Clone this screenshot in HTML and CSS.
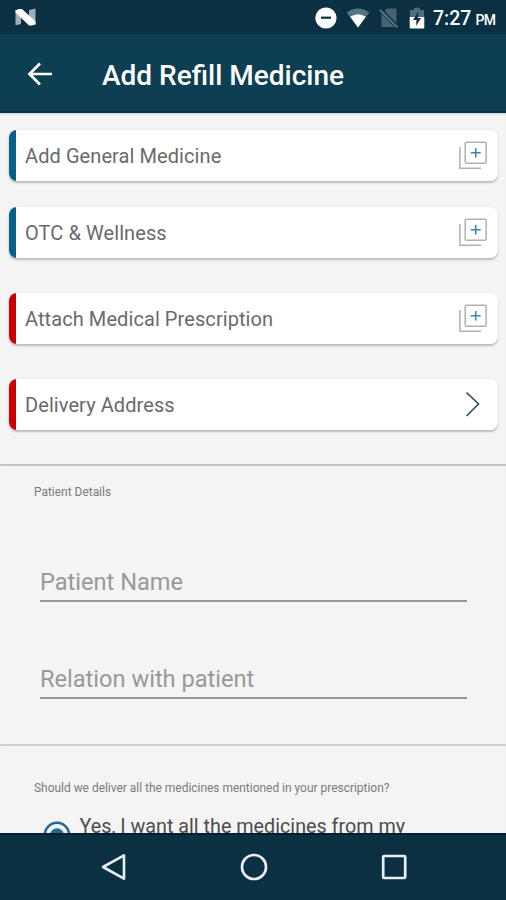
FILE: index.html
```html
<!DOCTYPE html>
<html lang="en">
<head>
<meta charset="utf-8">
<title>Add Refill Medicine</title>
<link rel="stylesheet" href="styles.css">
</head>
<body>
<svg class="defs" width="0" height="0" aria-hidden="true">
  <symbol id="add-copy" viewBox="0 0 30 30">
    <rect x="7.2" y="2.2" width="21" height="21" rx="1.2" fill="none" stroke="#b1b1b1" stroke-width="1.5"/>
    <path d="M1.900 7v21.3H23" fill="none" stroke="#b1b1b1" stroke-width="1.5"/>
    <path d="M12.700 12.7h10M17.700 7.9v9.6" stroke="#3f86ab" stroke-width="1.6"/>
  </symbol>
</svg>
<div class="screen">
  <header class="status">
    <svg class="n-logo" width="24" height="20" viewBox="0 0 24 20"><path d="M2.500 3h5.500v14l-5.500 1.200ZM16 3l6.500-1.500V17.500l-6.500-2Z" fill="#9eafb9"/><path d="M2.500 3.500 5.500 2h3.500L22.500 14.500v3l-4 1h-2.500L2.500 5.500Z" fill="#fff"/></svg>
    <div class="tray">
      <svg width="22" height="22" viewBox="0 0 22 22"><circle cx="11" cy="11" r="10.600" fill="#fff"/><path d="M6 10.700h10" stroke="#0a3041" stroke-width="2.200"/></svg>
      <svg width="24" height="20" viewBox="0 0 24 20"><path d="M.7 4.500Q12-3.500 23.300 4.500L12 19.500Z" fill="#587480"/><path d="M4.200 8.800Q12 3.500 19.800 8.800L12 19.500Z" fill="#fff"/></svg>
      <svg width="20" height="22" viewBox="0 0 20 22"><path d="M8 1.500h8.500q1 0 1 1V20h-15V7Z" fill="#48636f"/><path d="M1 2.500 19 20.500" stroke="#0a3041" stroke-width="4"/><path d="M1 3 18.500 20.500" stroke="#58727e" stroke-width="2"/></svg>
      <svg width="16" height="22" viewBox="0 0 16 22"><path d="M5 .8h6V3h4v7H1V3h4Z" fill="#506c78"/><path d="M.7 10h14.600v10.500q0 1-1 1H1.700q-1 0-1-1Z" fill="#fff"/><path d="M9.500 4.500 4 13h3.500L7 19l5-8H8.800Z" fill="#0a3041"/></svg>
      <div class="clock">7:27<span class="pm">PM</span></div>
    </div>
  </header>
  <div class="appbar">
    <svg class="back" width="26" height="26" viewBox="0 0 26 26"><path d="M25 13H3M13 2.500 2.500 13 13 23.500" fill="none" stroke="#fff" stroke-width="2.700"/></svg>
    <h1 class="title">Add Refill Medicine</h1>
  </div>
  <main class="content">
    <div class="cards">
      <div class="card blue"><span>Add General Medicine</span><svg class="icon" width="30" height="30"><use href="#add-copy"/></svg></div>
      <div class="card blue"><span>OTC &amp; Wellness</span><svg class="icon" width="30" height="30"><use href="#add-copy"/></svg></div>
      <div class="card red"><span>Attach Medical Prescription</span><svg class="icon" width="30" height="30"><use href="#add-copy"/></svg></div>
      <div class="card red"><span>Delivery Address</span><svg class="icon" width="30" height="30" viewBox="0 0 30 30"><path d="M8.500 3.500 20.500 15 8.500 27" fill="none" stroke="#365061" stroke-width="1.700"/></svg></div>
    </div>
    <section class="patient">
      <h2 class="caption">Patient Details</h2>
      <div class="field name">Patient Name</div>
      <div class="field relation">Relation with patient</div>
    </section>
    <section class="delivery">
      <p class="caption">Should we deliver all the medicines mentioned in your prescription?</p>
      <div class="option">
        <svg class="radio" width="28" height="28" viewBox="0 0 28 28"><circle cx="14" cy="14" r="12.200" fill="none" stroke="#1f6994" stroke-width="2.600"/><circle cx="14" cy="14" r="6.800" fill="#1f6994"/></svg>
        <span>Yes, I want all the medicines from my</span>
      </div>
    </section>
  </main>
  <nav class="navbar">
    <svg width="28" height="28" viewBox="0 0 28 28"><path d="M24 2.300v23.400L3 14Z" fill="none" stroke="#e9eef5" stroke-width="2.600" stroke-linejoin="round"/></svg>
    <svg width="28" height="28" viewBox="0 0 28 28"><circle cx="14" cy="14" r="12" fill="none" stroke="#e9eef5" stroke-width="2.700"/></svg>
    <svg width="28" height="28" viewBox="0 0 28 28"><rect x="3.200" y="3" width="22" height="22" rx="1" fill="none" stroke="#e9eef5" stroke-width="2.700"/></svg>
  </nav>
</div>
</body>
</html>
```
FILE: styles.css
```css
* { box-sizing: border-box; }
body { margin: 0; font-family: Roboto, "Liberation Sans", sans-serif; }
.defs { display: block; }
.screen { width: 506px; height: 900px; display: flex; flex-direction: column; overflow: hidden; background: #f4f4f4; }
.status { flex: none; height: 34px; background: #0a3041; display: flex; align-items: center; justify-content: space-between; padding: 0 9px 0 13px; }
.tray { display: flex; align-items: center; }
.tray svg { margin-right: 9px; margin-top: 1px; }
.tray svg:nth-child(3) { margin-right: 10px; }
.tray svg:nth-child(4) { margin-right: 8px; }
.clock { width: 64px; padding-top: 5px; color: #fff; font-size: 19.5px; font-weight: 500; line-height: 34px; white-space: nowrap; }
.pm { font-size: 14px; letter-spacing: -0.5px; margin-left: 4px; }
.appbar { flex: none; height: 79px; background: #0d3e51; border-bottom: 2px solid #092c46; display: flex; align-items: center; padding: 0 27px; }
.back { margin-top: 2px; }
.title { margin: 6px 0 0 49px; color: #fff; font-size: 28px; font-weight: 500; line-height: 36px; white-space: nowrap; }
.content { flex: 1; min-height: 0; overflow: hidden; box-shadow: inset 0 3px 3px -2px #cdcdcd; }
.cards { height: 351px; padding: 17px 8px 0 9px; }
.card { --accent: #086087; height: 51px; border-radius: 8px; background: linear-gradient(to right, var(--accent) 7px, #fff 7px); box-shadow: 0 2px 2px #bcbcbc, 0 0 2px #dddddd; display: flex; align-items: center; justify-content: space-between; padding: 0 10px 0 16px; color: #6a6a6a; font-size: 20px; letter-spacing: 0.08px; line-height: 28px; margin-bottom: 35px; white-space: nowrap; }
.card:first-child { margin-bottom: 26px; }
.card span { padding-top: 1px; }
.icon { margin-bottom: 2px; }
.card.red { --accent: #cb0006; }
.patient { height: 280px; border-top: 2px solid #c4c4c4; padding: 18px 39px 0 40px; }
.caption { margin: 0 0 0 -6px; font-size: 11.95px; line-height: 16px; font-weight: 400; color: #7b7b7b; white-space: nowrap; }
.field { border-bottom: 2px solid #969696; color: #999; font-size: 23.6px; line-height: 30px; white-space: nowrap; }
.name { margin-top: 67px; height: 35px; }
.relation { margin-top: 62px; height: 35px; }
.delivery { border-top: 2px solid #d0d0d0; padding: 34px 34px 0 40px; }
.option { margin: 17px 0 0 3px; display: flex; align-items: flex-start; color: #4c4c4c; font-size: 19.75px; line-height: 28px; white-space: nowrap; }
.radio { margin: 8px 8.5px 0 0; }
.navbar { flex: none; height: 67px; background: #0a3041; border-top: 2px solid #061e34; display: flex; justify-content: space-between; align-items: center; padding: 0 98px 2px 100px; }
```
